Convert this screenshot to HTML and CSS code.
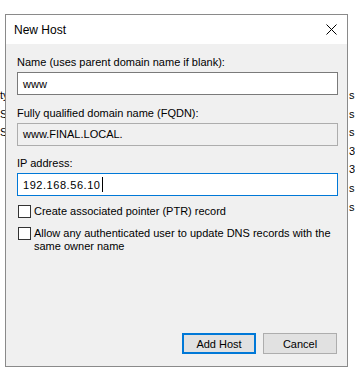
FILE: index.html
```html
<!DOCTYPE html>
<html lang="en">
<head>
    <meta charset="UTF-8">
    <meta name="viewport" content="width=device-width, initial-scale=1.0">
    <title>New Host</title>
    <link rel="stylesheet" href="styles.css">
</head>
<body>
    <!-- the DNS console list behind the dialog -->
    <div class="behind">
        <div class="behind-row"><span class="behind-left">ty</span><span class="behind-right">s</span></div>
        <div class="behind-row"><span class="behind-left">S</span><span class="behind-right">s</span></div>
        <div class="behind-row"><span class="behind-left">S</span><span class="behind-right">s</span></div>
        <div class="behind-row"><span class="behind-left"></span><span class="behind-right">3</span></div>
        <div class="behind-row"><span class="behind-left"></span><span class="behind-right">3</span></div>
        <div class="behind-row"><span class="behind-left"></span><span class="behind-right">s</span></div>
        <div class="behind-row"><span class="behind-left"></span><span class="behind-right">s</span></div>
    </div>

    <div class="dialog">
        <div class="titlebar">
            <span class="title">New Host</span>
            <svg class="close" width="11" height="11" viewBox="0 0 11 11">
                <path d="M0.5 0.5 L10.5 10.5 M10.5 0.5 L0.5 10.5" stroke="#000" stroke-width="1" fill="none"/>
            </svg>
        </div>

        <div class="dialog-body">
            <div class="field">
                <label class="field-label">Name (uses parent domain name if blank):</label>
                <div class="textbox">www</div>
            </div>

            <div class="field">
                <label class="field-label">Fully qualified domain name (FQDN):</label>
                <div class="textbox textbox-readonly">www.FINAL.LOCAL.</div>
            </div>

            <div class="field">
                <label class="field-label">IP address:</label>
                <div class="textbox textbox-focus"><span class="ip-text">192.168.56.10</span><span class="caret"></span></div>
            </div>

            <div class="check-row">
                <span class="checkbox"></span>
                <span class="check-label">Create associated pointer (PTR) record</span>
            </div>
            <div class="check-row">
                <span class="checkbox"></span>
                <span class="check-label">Allow any authenticated user to update DNS records with the same owner name</span>
            </div>

            <div class="buttons">
                <button class="btn btn-default">Add Host</button>
                <button class="btn">Cancel</button>
            </div>
        </div>
    </div>
</body>
</html>
```

FILE: styles.css
```css
* {
    margin: 0;
    padding: 0;
    box-sizing: border-box;
    font-family: 'Liberation Sans', Arial, sans-serif;
}
body {
    background: #fff;
    color: #000;
    font-size: 11px;
    width: 355px;
    height: 377px;
    overflow: hidden;
    position: relative;
}

/* list behind the dialog */
.behind {
    padding-top: 86px;
    display: flex;
    flex-direction: column;
}
.behind-row {
    display: flex;
    justify-content: space-between;
    height: 18.6px;
    line-height: 18.6px;
    white-space: nowrap;
}
.behind-left {
    width: 10px;
    overflow: hidden;
}
.behind-right {
    width: 6px;
}

/* dialog window */
.dialog {
    position: absolute;
    left: 5px;
    top: 14px;
    width: 343px;
    height: 353px;
    border: 1px solid #8a8a8a;
    background: #f0f0f0;
    display: flex;
    flex-direction: column;
}
.titlebar {
    height: 29px;
    background: #fff;
    display: flex;
    align-items: center;
    justify-content: space-between;
    padding: 0 10px 0 8px;
}
.title {
    font-size: 12px;
}
.close {
    display: block;
}
.dialog-body {
    flex: 1;
    display: flex;
    flex-direction: column;
    padding: 10px 9px 12px 11px;
}
.field {
    display: flex;
    flex-direction: column;
    gap: 2px;
    margin-bottom: 9.5px;
}
.field-label {
    display: block;
    line-height: 16px;
}
.textbox {
    height: 23px;
    border: 1px solid #7a7a7a;
    background: #fff;
    padding: 0 5px;
    display: flex;
    align-items: center;
    line-height: 14px;
}
.textbox-readonly {
    background: #f0f0f0;
    border-color: #adadad;
}
.textbox-focus {
    border-color: #0078d7;
}
.ip-text {
    letter-spacing: 0.55px;
}
.caret {
    display: inline-block;
    width: 1px;
    height: 15px;
    background: #000;
    margin-left: 1px;
}
.check-row {
    display: flex;
    align-items: flex-start;
    gap: 3px;
    margin-bottom: 8px;
}
.field + .check-row {
    margin-top: -1.5px;
}
.checkbox {
    flex: none;
    width: 13px;
    height: 13px;
    border: 1px solid #333;
    background: #fff;
    margin-top: 1px;
    margin-left: 1px;
}
.check-label {
    line-height: 12.5px;
    margin-top: 1px;
    width: 300px;
}
.buttons {
    margin-top: auto;
    display: flex;
    justify-content: flex-end;
    gap: 7px;
    padding-right: 1px;
}
.btn {
    width: 74px;
    height: 21px;
    border: 1px solid #adadad;
    background: #e1e1e1;
    font-size: 11px;
    color: #000;
}
.btn-default {
    border: 2px solid #0078d7;
}
```
